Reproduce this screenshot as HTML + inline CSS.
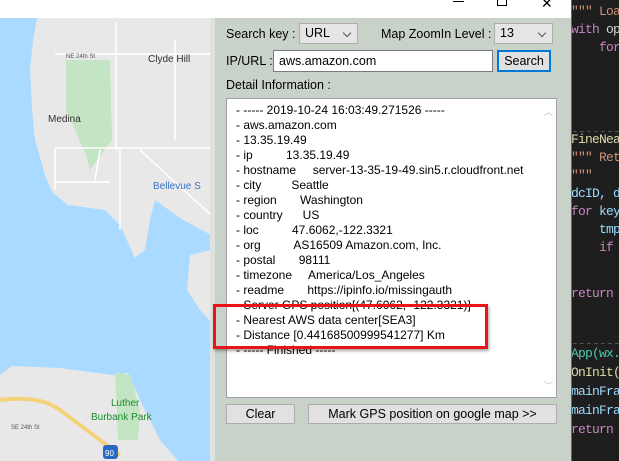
<!DOCTYPE html>
<html><head><style>
*{margin:0;padding:0;box-sizing:border-box}
body{width:619px;height:461px;overflow:hidden;position:relative;background:#c9d2c9;font-family:"Liberation Sans",sans-serif;font-size:12px;color:#000}
.a{position:absolute}
.title{left:0;top:0;width:571px;height:18px;background:#fff}
.code{left:571px;top:0;width:48px;height:461px;background:#1e1e1e;border-left:1px solid #3a6fb0;font-family:"Liberation Mono",monospace;font-size:13px;letter-spacing:-0.8px;white-space:pre;overflow:hidden}
.code div{position:absolute;left:-1px;height:18px;line-height:18px}
.combo{background:#e5e5e5;border:1px solid #adadad;height:21px;line-height:19px;padding-left:5px;font-size:12.5px}
.combo:after{content:"";position:absolute;right:7px;top:6px;width:5px;height:5px;border-right:1px solid #555;border-bottom:1px solid #555;transform:rotate(45deg)}
.btn{background:#e1e1e1;border:1px solid #adadad;text-align:center;font-size:12.5px;line-height:18px}
.lines div{position:absolute;left:9px;white-space:pre;font-size:12px;line-height:15px}
</style></head><body>
<div class="a title">
<div class="a" style="left:453px;top:1px;width:11px;height:1px;background:#000"></div>
<div class="a" style="left:497px;top:-4px;width:10px;height:10px;border:1px solid #000"></div>
<div class="a" style="left:541px;top:-5px;font-size:14px">✕</div>
</div>
<svg class="a" style="left:0;top:18px" width="211" height="443" viewBox="0 18 211 443">
<rect x="0" y="18" width="211" height="443" fill="#aadaff"/>
<polygon fill="#e8e8e8" points="37,18 33,40 30,70 32,110 35,140 45,175 52,192 68,205 105,210 120,225 135,258 145,250 150,220 155,200 180,218 211,235 211,18"/>
<polygon fill="#e8e8e8" points="190,255 211,250 211,322 200,310 187,290"/>
<polygon fill="#e8e8e8" points="0,375 12,366 60,368 112,375 128,373 140,400 160,440 178,461 0,461"/>
<polygon fill="#c4e5c4" points="66,60 110,60 112,140 90,170 86,155 66,110"/>
<polygon fill="#c4e5c4" points="115,372 130,375 140,410 138,440 118,440"/>
<g stroke="#fff" stroke-width="1.5" fill="none">
<path d="M55,54H211M55,148H211M116,22V150M55,148V190M175,40V140M140,150L211,215M55,182H110M100,150L95,180M120,150V230"/>
<path d="M0,400Q40,395 60,410L120,455" stroke="#f3d27a" stroke-width="4"/>
</g>
<text x="66" y="58" font-size="6" fill="#555" font-family="Liberation Sans">NE 24th St</text>
<text x="148" y="62" font-size="10" fill="#333" font-family="Liberation Sans">Clyde Hill</text>
<text x="48" y="122" font-size="10" fill="#333" font-family="Liberation Sans">Medina</text>
<text x="153" y="189" font-size="10" fill="#3a73c8" font-family="Liberation Sans">Bellevue S</text>
<text x="111" y="406" font-size="10" fill="#1a8a2a" font-family="Liberation Sans">Luther</text>
<text x="91" y="420" font-size="10" fill="#1a8a2a" font-family="Liberation Sans">Burbank Park</text>
<text x="11" y="429" font-size="6" fill="#555" font-family="Liberation Sans">SE 24th St</text>
<rect x="103" y="445" width="15" height="14" rx="3" fill="#2a6ac4"/>
<text x="105" y="456" font-size="8" fill="#fff" font-family="Liberation Sans">90</text>
</svg>
<div class="a" style="left:210px;top:18px;width:5px;height:443px;background:#dfe3df"></div>
<div class="a" style="left:226px;top:27px;font-size:12.5px">Search key :</div>
<div class="a combo" style="left:299px;top:23px;width:59px">URL</div>
<div class="a" style="left:381px;top:27px;font-size:12.5px">Map ZoomIn Level :</div>
<div class="a combo" style="left:494px;top:23px;width:59px">13</div>
<div class="a" style="left:226px;top:54px;font-size:12.5px">IP/URL :</div>
<div class="a" style="left:273px;top:50px;width:220px;height:22px;background:#fff;border:1px solid #7a7a7a;font-size:12.5px;line-height:20px;padding-left:5px">aws.amazon.com</div>
<div class="a btn" style="left:497px;top:50px;width:54px;height:22px;border:2px solid #0078d7;line-height:18px">Search</div>
<div class="a" style="left:226px;top:78px;font-size:12.5px">Detail Information :</div>
<div class="a lines" style="left:226px;top:98px;width:331px;height:300px;background:#fff;border:1px solid #a0a0a0">
<div style="top:4px">- ----- 2019-10-24 16:03:49.271526 -----</div>
<div style="top:19px">- aws.amazon.com</div>
<div style="top:34px">- 13.35.19.49</div>
<div style="top:49px">- ip          13.35.19.49</div>
<div style="top:64px">- hostname     server-13-35-19-49.sin5.r.cloudfront.net</div>
<div style="top:79px">- city         Seattle</div>
<div style="top:94px">- region       Washington</div>
<div style="top:109px">- country      US</div>
<div style="top:124px">- loc          47.6062,-122.3321</div>
<div style="top:139px">- org          AS16509 Amazon.com, Inc.</div>
<div style="top:154px">- postal       98111</div>
<div style="top:169px">- timezone     America/Los_Angeles</div>
<div style="top:184px">- readme       https://ipinfo.io/missingauth</div>
<div style="top:199px">- Server GPS position[(47.6062, -122.3321)]</div>
<div style="top:214px">- Nearest AWS data center[SEA3]</div>
<div style="top:229px">- Distance [0.44168500999541277] Km</div>
<div style="top:244px">- ----- Finished -----</div>
<div style="left:317px;top:6px;color:#bbb;font-size:9px">︿</div>
<div style="left:317px;top:280px;color:#bbb;font-size:9px">﹀</div>
</div>
<div class="a" style="left:213px;top:304px;width:275px;height:45px;border:3px solid #e8141a;box-shadow:1px 2px 3px rgba(0,0,0,.35)"></div>
<div class="a btn" style="left:226px;top:404px;width:69px;height:20px">Clear</div>
<div class="a btn" style="left:308px;top:404px;width:249px;height:20px">Mark GPS position on google map &gt;&gt;</div>
<div class="a code">
<div style="top:3px;color:#ce9178">""" Loa</div>
<div style="top:21px"><span style="color:#c586c0">with</span><span style="color:#d4d4d4"> op</span></div>
<div style="top:39px;color:#c586c0">    for</div>
<div style="top:123px;color:#555">-------</div>
<div style="top:131px;color:#dcdcaa">FineNea</div>
<div style="top:149px;color:#ce9178">""" Ret</div>
<div style="top:167px;color:#ce9178">"""</div>
<div style="top:185px;color:#9cdcfe">dcID, d</div>
<div style="top:203px"><span style="color:#c586c0">for</span><span style="color:#9cdcfe"> key</span></div>
<div style="top:221px;color:#9cdcfe">    tmp</div>
<div style="top:239px;color:#c586c0">    if</div>
<div style="top:285px;color:#c586c0">return</div>
<div style="top:335px;color:#555">-------</div>
<div style="top:345px;color:#4ec9b0">App(wx.</div>
<div style="top:364px;color:#dcdcaa">OnInit(</div>
<div style="top:383px;color:#9cdcfe">mainFra</div>
<div style="top:402px;color:#9cdcfe">mainFra</div>
<div style="top:421px;color:#c586c0">return</div>
</div>
</body></html>
